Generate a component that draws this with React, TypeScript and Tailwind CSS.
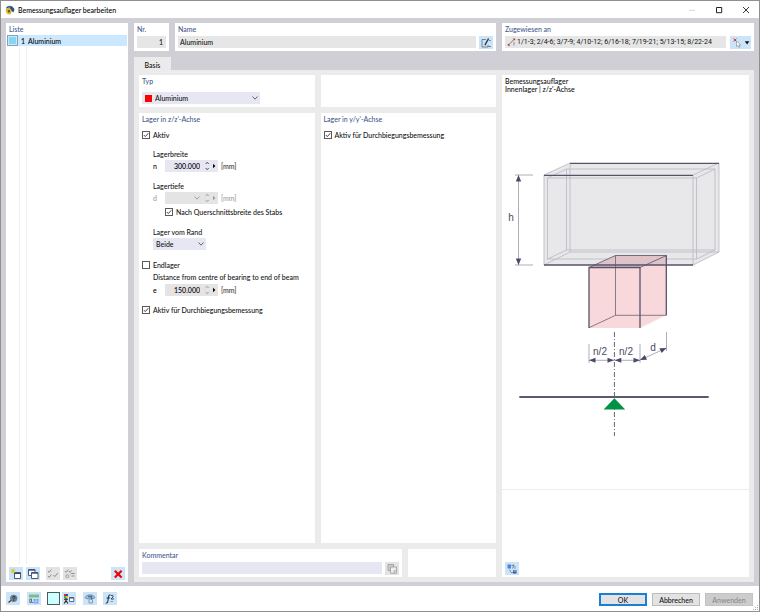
import type { ReactNode } from 'react'
import clsx from 'clsx'

/* ---------- building blocks ---------- */

function Card({ title, className, children }: { title?: string; className?: string; children?: ReactNode }) {
    return (
        <section className={clsx('bg-white px-[3px] min-w-0', className)}>
            {title && <h2 className="h-3 leading-3 text-[#44598c]">{title}</h2>}
            {children}
        </section>
    )
}

function IconButton({ label, disabled, className, children }: { label: string; disabled?: boolean; className?: string; children: ReactNode }) {
    return (
        <button
            type="button"
            aria-label={label}
            title={label}
            disabled={disabled}
            className={clsx('h-[13px] w-[14px] shrink-0 flex items-center justify-center', disabled ? 'bg-[#e3e3e3]' : 'bg-[#cce4f7]', className)}
        >
            {children}
        </button>
    )
}

function Icon({ children }: { children: ReactNode }) {
    return (
        <svg viewBox="0 0 12 12" className="size-3" fill="none" aria-hidden="true">
            {children}
        </svg>
    )
}

function Chevron({ className }: { className?: string }) {
    return (
        <svg viewBox="0 0 6 4" className={clsx('w-1.5 h-1 pointer-events-none', className)} fill="none" aria-hidden="true">
            <path d="M.5 .5 3 3.2 5.5 .5" stroke="currentColor" strokeWidth=".9" />
        </svg>
    )
}

function Check({ label, checked, className }: { label: string; checked?: boolean; className?: string }) {
    return (
        <label className={clsx('flex items-center gap-[3px] h-3', className)}>
            <span className="grid size-2 shrink-0">
                <input type="checkbox" defaultChecked={checked} className="peer appearance-none size-2 border border-[#5a5a5a] bg-white [grid-area:1/1]" />
                <svg viewBox="0 0 8 8" className="size-2 hidden peer-checked:block pointer-events-none [grid-area:1/1]" fill="none" aria-hidden="true">
                    <path d="M1.8 4 3.3 5.6 6.3 2.2" stroke="#333" strokeWidth=".9" />
                </svg>
            </span>
            {label}
        </label>
    )
}

function Dropdown({ label, value, className, children }: { label: string; value: string; className?: string; children?: ReactNode }) {
    return (
        <div className={clsx('flex items-center h-3 bg-[#e7e7f3] relative', className)}>
            {children}
            <select aria-label={label} className="appearance-none w-full h-3 leading-3 bg-transparent pl-[3px] pr-3">
                <option>{value}</option>
            </select>
            <Chevron className="absolute right-[2px] text-[#555]" />
        </div>
    )
}

type NumberFieldProps = { id: string; symbol: string; value?: string; disabled?: boolean; readOnly?: boolean; className?: string }

function NumberField({ id, symbol, value = '', disabled, readOnly, className }: NumberFieldProps) {
    return (
        <div className={clsx('flex items-center h-3 ml-[11px]', disabled ? 'text-[#9b9b9b]' : 'text-black', className)}>
            <label htmlFor={id} className="w-3">
                {symbol}
            </label>
            <div className={clsx('flex items-center w-[53px] h-3', disabled || readOnly ? 'bg-[#e4e4e4]' : 'bg-[#e7e7f3]')}>
                <input
                    id={id}
                    type="text"
                    defaultValue={value}
                    disabled={disabled}
                    readOnly={readOnly}
                    className="flex-1 min-w-0 h-3 leading-3 text-right bg-transparent"
                />
                {disabled && <Chevron />}
                <svg viewBox="0 0 18 12" className="w-[18px] h-3 shrink-0" aria-hidden="true">
                    <path d="M5.7 4 7.2 2.3 8.7 4M5.7 8 7.2 9.7 8.7 8" fill="none" stroke={disabled || readOnly ? '#999' : '#444'} strokeWidth=".9" />
                    <path d="M13 3.8 15.4 6 13 8.2z" fill="currentColor" />
                </svg>
            </div>
            <span className={clsx('ml-[3px]', !disabled && 'text-[#333]')}>[mm]</span>
        </div>
    )
}

/* ---------- support sketch ---------- */

function SupportSketch() {
    return (
        <svg viewBox="0 0 247 394" className="w-full flex-1 min-h-0" fill="none" role="img" aria-label="Innenlager">
            {/* hollow beam */}
            <path d="M42 80 68 68H217V157L191 170H42z" fill="#e8e8ea" />
            <g stroke="#bcbcc5" strokeWidth=".9">
                <path d="M42 80V170M191 80V170M68 68V157H217V68M42 80 68 68M191 80 217 68M42 170 68 157M191 170 217 157" />
                <path d="M45.5 83H194.5V164H45.5zM64.5 74H213V155H64.5z" />
                <path d="M45.5 83 64.5 74M194.5 83 213 74M45.5 164 64.5 155M194.5 164 213 155" />
            </g>
            <path d="M42 80.3H191M68 68.3H217" stroke="#55536a" strokeWidth="1.3" />

            {/* bearing block */}
            <path d="M87 172.5 113.5 160.5H164.5V220L138 233H87z" fill="#f8d8da" />
            <path d="M87 172.5 113.5 160.5H164.5V168L160 170H138V172.5z" fill="#dfc3c9" />
            <path d="M42 170H191" stroke="#55536a" strokeWidth="1.5" />
            <g stroke="#55536a">
                <path d="M87 172.5 113.5 160.5H164.5L138 172.5" strokeWidth=".8" />
                <path d="M113.5 160.5V220.3H164.5M87 232.7 113.5 220.3" strokeWidth=".7" />
                <path d="M87 233V172.5H138V233M164.3 160.5V220.3" strokeWidth="1.3" />
            </g>

            {/* dimension lines */}
            <g stroke="#8b8a9c" strokeWidth=".7">
                <path d="M13 80H31M13 170H31M16.5 80V170" />
                <path d="M87 249V268M138 249V268M164.5 237V256M87 265.3H138M138 265 164.5 253" />
            </g>
            <path d="M112.4 237V341" stroke="#55536a" strokeWidth=".9" strokeDasharray="5 2 1 2" />
            <g fill="#4b4a66">
                <path d="M16.5 80 13.8 86.5H19.2zM16.5 170 13.8 163.5H19.2z" />
                <path d="M87 265.3 93.5 262.8V267.8zM112 265.3 105.5 262.8V267.8zM112.8 265.3 119.3 262.8V267.8zM138 265.3 131.5 262.8V267.8z" />
                <path d="M138 265 142.8 260 145 264.8zM164.5 253 157.4 253.2 159.7 258z" />
            </g>
            <g fill="#4b4a66" fontFamily="Liberation Sans, sans-serif" fontSize="10" fontWeight="400" textAnchor="middle">
                <text x="9" y="126">h</text>
                <text x="98" y="260">n/2</text>
                <text x="124" y="260">n/2</text>
                <text x="151" y="256">d</text>
            </g>

            {/* static system */}
            <path d="M17.3 302H206.7" stroke="#5c5a70" strokeWidth="2" />
            <path d="M112.4 303.3 123.2 314.4H101.6z" fill="#009245" />
        </svg>
    )
}

/* ---------- dialog parts ---------- */

function TitleBar() {
    return (
        <header className="h-[17px] bg-white flex items-center pl-1">
            <svg viewBox="0 0 10 10" className="size-2.5" aria-hidden="true">
                <path d="M1 3.5C1.5 1 4.5 0 7 1.2L9.5 4 8.5 7.5 6.5 6 5 3.6z" fill="#2f5678" />
                <path d="M.8 3.6 3 3 5.2 4.2 6.8 6.6 5.6 9.4 2.6 9.2.9 7z" fill="#e5b930" />
                <path d="M2.6 5.2 4.6 4.8 5.2 7 3.4 7.8z" fill="#5b5a36" />
                <path d="M3 2.4 5.6 1.8" stroke="#8db2cf" strokeWidth=".7" />
            </svg>
            <h1 className="ml-[3px] text-black">Bemessungsauflager bearbeiten</h1>
            <div className="ml-auto flex">
                <button type="button" aria-label="Minimieren" disabled className="w-[27px] h-4 flex items-center justify-center">
                    <svg viewBox="0 0 8 8" className="size-2"><path d="M1 4.3H7" stroke="#ccc" strokeWidth=".8" /></svg>
                </button>
                <button type="button" aria-label="Maximieren" className="w-[27px] h-4 flex items-center justify-center">
                    <svg viewBox="0 0 8 8" className="size-2" fill="none"><path d="M1.5 1.5H6.7V6.7H1.5z" stroke="#222" /></svg>
                </button>
                <button type="button" aria-label="Schließen" className="w-[27px] h-4 flex items-center justify-center">
                    <svg viewBox="0 0 8 8" className="size-2"><path d="M1 1 7 7M7 1 1 7" stroke="#222" strokeWidth=".9" /></svg>
                </button>
            </div>
        </header>
    )
}

function ListPanel() {
    return (
        <aside className="w-[122px] bg-white flex flex-col">
            <h2 className="h-3 leading-3 pl-[3px] text-[#44598c]">Liste</h2>
            <ul className="px-px">
                <li>
                    <button type="button" className="w-full h-[11px] flex items-center bg-[#cce8ff] text-black">
                        <span className="size-[11px] border border-[#7fa3b8] bg-[#cce8ff] p-px">
                            <span className="block size-full bg-[#87d5f3]" />
                        </span>
                        <span className="w-[7px] text-right">1</span>
                        <span className="ml-[3px]">Aluminium</span>
                    </button>
                </li>
            </ul>
            <div className="flex-1 ml-[13px] w-2 border-x border-[#efefef]" />
            <div className="flex items-center px-[3px] pt-[3px] pb-[2px]">
                <IconButton label="Neu">
                    <Icon>
                        <path d="M4.5 4.5H10.5V10.5H4.5z" fill="#fff" stroke="#4d5a7d" />
                        <path d="M4 5.5H11" stroke="#37456b" />
                        <path d="M3 .5V5.5M.5 3H5.5M1.2 1.2 4.8 4.8M4.8 1.2 1.2 4.8" stroke="#d9c400" strokeWidth=".8" />
                    </Icon>
                </IconButton>
                <IconButton label="Kopieren" className="ml-[3px]">
                    <Icon>
                        <path d="M1.5 1.5H8V7.5H1.5z" fill="#fff" stroke="#4d5a7d" />
                        <path d="M1.5 2.2H8" stroke="#37456b" />
                        <path d="M4.5 4.5H11V10.5H4.5z" fill="#fff" stroke="#4d5a7d" />
                        <path d="M4.5 5.2H11" stroke="#37456b" />
                    </Icon>
                </IconButton>
                <IconButton label="Alle auswählen" disabled className="ml-1.5">
                    <Icon>
                        <path d="M1 3 2.2 4.4 4.4 1.6M1 8 2.2 9.4 4.4 6.6M6.4 7 7.8 8.6 10.8 5" stroke="#8f8f8f" />
                    </Icon>
                </IconButton>
                <IconButton label="Auswahl umkehren" disabled className="ml-[3px]">
                    <Icon>
                        <path d="M1 3 2.2 4.4 4.4 1.6M4.8 3 6 4.4 7.6 2.4M6.5 6.2 7.5 5.5H10.8M7.5 8H10.5" stroke="#8f8f8f" />
                        <circle cx="3.4" cy="8.2" r="1.5" stroke="#8f8f8f" strokeWidth=".8" />
                    </Icon>
                </IconButton>
                <IconButton label="Löschen" className="ml-auto">
                    <Icon>
                        <path d="M2.8 2.8 9.6 9.6M9.6 2.8 2.8 9.6" stroke="#f00000" strokeWidth="2.1" />
                    </Icon>
                </IconButton>
            </div>
        </aside>
    )
}

function TopRow() {
    return (
        <div className="grid grid-cols-[35px_minmax(0,1fr)_252px] gap-1.5 h-7">
            <Card title="Nr.">
                <input aria-label="Nr." readOnly value="1" className="block mt-px w-full h-3 leading-3 bg-[#e6e6e6] text-right pr-[3px]" />
            </Card>
            <Card title="Name">
                <div className="flex gap-[3px] mt-px">
                    <input aria-label="Name" readOnly value="Aluminium" className="flex-1 min-w-0 h-3 leading-3 bg-[#e6e6e6] pl-0.5" />
                    <IconButton label="Name bearbeiten">
                        <Icon>
                            <path d="M6 2.5H2V10H8V8" stroke="#5d6e7a" strokeWidth=".8" />
                            <path d="M8.6 1.5 5.6 6.8 5 8.3" stroke="#2d3d48" strokeWidth="1.4" />
                            <path d="M8 9.5H11M8.8 3.5H10.8" stroke="#5d6e7a" strokeWidth=".8" />
                        </Icon>
                    </IconButton>
                </div>
            </Card>
            <Card title="Zugewiesen an">
                <div className="flex gap-1 mt-px">
                    <div className="flex flex-1 min-w-0 items-center bg-[#e6e6e6] h-3 pl-0.5">
                        <svg viewBox="0 0 10 10" className="size-2.5 shrink-0" fill="none" aria-hidden="true">
                            <path d="M1.5 8 7 2.5" stroke="#777" />
                            <path d="M.8 7.2 2.5 8.8M6.5 1.5 8 3" stroke="#e02020" strokeWidth="1.3" />
                            <path d="M7 5V8.5" stroke="#777" strokeWidth=".8" />
                        </svg>
                        <input
                            aria-label="Zugewiesen an"
                            readOnly
                            value="1/1-3; 2/4-6; 3/7-9; 4/10-12; 6/16-18; 7/19-21; 5/13-15; 8/22-24"
                            className="flex-1 min-w-0 h-3 leading-3 bg-transparent font-[Roboto,sans-serif] font-normal"
                        />
                    </div>
                    <button type="button" aria-label="Auswählen" className="w-[21px] h-[13px] bg-[#cce4f7] flex items-center justify-center">
                        <Icon>
                            <path d="M1.5 1.5 4.5 4.5M4.5 1.5 1.5 4.5" stroke="#e02020" strokeWidth=".9" />
                            <path d="M4.5 4V9.5L6 8.3 7 10.5 8 10 7 7.9H8.7z" fill="#fff" stroke="#8592a0" strokeWidth=".7" />
                        </Icon>
                        <svg viewBox="0 0 6 4" className="w-1.5 h-1"><path d="M.8 .3H5.4L3.1 3.4z" fill="#111" /></svg>
                    </button>
                </div>
            </Card>
        </div>
    )
}

function BasisPanel() {
    return (
        <div className="flex-1 bg-[#ebebeb] p-[5px] grid grid-cols-[minmax(0,1fr)_247px] gap-1.5">
            <div className="grid grid-rows-[32px_1fr_28px] gap-1.5">
                <div className="grid grid-cols-2 gap-1.5">
                    <Card title="Typ">
                        <Dropdown label="Typ" value="Aluminium" className="mt-[5px] w-[118px] pl-[3px]">
                            <span className="size-[7px] bg-[#ff0000] shrink-0" />
                        </Dropdown>
                    </Card>
                    <Card />
                </div>
                <div className="grid grid-cols-2 gap-1.5">
                    <Card title="Lager in z/z'-Achse">
                        <Check label="Aktiv" checked className="mt-1" />
                        <h3 className="h-3 leading-3 mt-[7px] ml-[11px]">Lagerbreite</h3>
                        <NumberField id="width" symbol="n" value="300.000" />
                        <h3 className="h-3 leading-3 mt-2 ml-[11px]">Lagertiefe</h3>
                        <NumberField id="depth" symbol="d" disabled />
                        <Check label="Nach Querschnittsbreite des Stabs" checked className="mt-0.5 ml-[23px]" />
                        <h3 className="h-3 leading-3 mt-2 ml-[11px]">Lager vom Rand</h3>
                        <Dropdown label="Lager vom Rand" value="Beide" className="ml-[11px] w-[53px]" />
                        <Check label="Endlager" className="mt-[9px]" />
                        <p className="h-3 leading-3 ml-[11px] whitespace-nowrap">Distance from centre of bearing to end of beam</p>
                        <NumberField id="distance" symbol="e" value="150.000" readOnly className="mt-px" />
                        <Check label="Aktiv für Durchbiegungsbemessung" checked className="mt-2" />
                    </Card>
                    <Card title="Lager in y/y'-Achse">
                        <Check label="Aktiv für Durchbiegungsbemessung" checked className="mt-1" />
                    </Card>
                </div>
                <div className="grid grid-cols-[minmax(0,1fr)_88px] gap-1.5">
                    <Card title="Kommentar">
                        <div className="flex gap-[3px] mt-px">
                            <input aria-label="Kommentar" className="flex-1 min-w-0 h-3 leading-3 bg-[#e7e7f3]" />
                            <IconButton label="Kommentar wählen" disabled>
                                <Icon>
                                    <path d="M2 1.5H7.5V7.5H2z" fill="#ccc" stroke="#999" strokeWidth=".8" />
                                    <path d="M4.5 4H10.5V10.2H4.5z" fill="#eee" stroke="#999" strokeWidth=".8" />
                                    <path d="M8 10 8.2 7.8 10.3 7.7" stroke="#999" strokeWidth=".8" />
                                </Icon>
                            </IconButton>
                        </div>
                    </Card>
                    <Card />
                </div>
            </div>
            <section className="bg-white flex flex-col">
                <p className="leading-2 pt-0.5 pl-[3px] h-5">
                    Bemessungsauflager
                    <br />
                    Innenlager | z/z'-Achse
                </p>
                <SupportSketch />
                <div className="h-[88px] border-t border-[#ededed] flex items-end p-[3px] pb-[2px]">
                    <IconButton label="Ansicht">
                        <Icon>
                            <path d="M1.5 1.5H5V5.5H1.5z" fill="#4a86d8" />
                            <path d="M5.5 2.5 8 2 6.5 5.5" stroke="#666" strokeWidth=".8" />
                            <path d="M3.5 6.5 5 9.5H7M9 3V6" stroke="#7c93b5" />
                            <path d="M7 7H10.5V10.5H7z" fill="#35589a" />
                            <path d="M7.5 8H10" stroke="#fff" strokeWidth=".7" />
                        </Icon>
                    </IconButton>
                </div>
            </section>
        </div>
    )
}

function Footer() {
    return (
        <footer className="h-[25px] bg-white flex items-center pl-[5px] pr-1.5 relative">
            <IconButton label="Hilfe">
                <Icon>
                    <circle cx="6.7" cy="5.3" r="3.6" fill="#6d7f8d" />
                    <path d="M1.5 9.5 4 7.5" stroke="#444" strokeWidth="1.4" />
                    <path d="M5.6 4.4C5.8 3 8 3.2 7.8 4.6 7.6 5.4 6.7 5.4 6.7 6.4M6.7 7.1V7.8" stroke="#182028" strokeWidth=".9" />
                </Icon>
            </IconButton>
            <IconButton label="Einheiten" className="ml-[7px]">
                <Icon>
                    <path d="M1 1.5H11V4.5H1z" fill="#80bd84" />
                    <path d="M1.8 6V9.5H3.5V6zM4.5 9V10" stroke="#3c5c78" strokeWidth=".8" />
                    <path d="M5.5 6H10.5V10.5H5.5z" fill="#6ea7ea" />
                    <path d="M5.5 8.2H10.5M8 6V10.5" stroke="#cfe4fa" strokeWidth=".6" />
                </Icon>
            </IconButton>
            <button type="button" aria-label="Farbe" className="ml-1.5 size-[13px] border border-[#4d5a5c] bg-[#ccffff]" />
            <IconButton label="Anzeige" className="ml-[2px]">
                <Icon>
                    <path d="M1 1H3V3.2H1z" fill="#e22" />
                    <path d="M3 1H5V3.2H3z" fill="#2a4bd8" />
                    <path d="M1 3.2H3V5H1z" fill="#2ab52a" />
                    <path d="M3 3.2H5V5H3z" fill="#eac300" />
                    <path d="M3 5V7.5L1.2 10.5M3 7.5 4.8 10.5M1 6.2H5" stroke="#222" strokeWidth="1.1" />
                    <path d="M6.5 4.5H10.8V8.5H6.5z" fill="#fff" stroke="#4d5a7d" strokeWidth=".9" />
                    <path d="M6.5 5H10.8" stroke="#37456b" />
                </Icon>
            </IconButton>
            <IconButton label="Ansicht zurücksetzen" className="ml-[7px]">
                <Icon>
                    <path d="M1 4.5C3 1 9 1 11 4.5 9 6.5 3 6.5 1 4.5z" fill="#a9c4dc" stroke="#5d7890" strokeWidth=".8" />
                    <path d="M4 3.5H7.5V6.5" stroke="#476d90" strokeWidth="1.4" />
                    <path d="M5 6.5V10H8.5V6.5" stroke="#7f9db8" />
                </Icon>
            </IconButton>
            <IconButton label="Formel" className="ml-1.5">
                <Icon>
                    <path d="M6.5 2.2C5 1.6 4.6 3 4.4 4.5L3.8 8.5C3.6 9.8 2.8 10.4 1.8 9.8M2.6 5H6" stroke="#22364a" strokeWidth="1.1" />
                    <path d="M7 2.8C8 1.6 9.8 2.4 9 4L7 6H10" stroke="#22364a" strokeWidth=".9" />
                    <path d="M6.5 8.5H9" stroke="#6d8aa5" strokeWidth=".8" />
                </Icon>
            </IconButton>
            <div className="ml-auto flex gap-[5px] pt-0.5">
                <button type="button" className="w-12 h-[13px] border-2 border-[#1a80d6] bg-[#e3e3e3] flex items-center justify-center">OK</button>
                <button type="button" className="w-12 h-[13px] border border-[#bcbcbc] bg-[#e3e3e3] flex items-center justify-center">Abbrechen</button>
                <button type="button" disabled className="w-12 h-[13px] border border-[#c3c3c3] bg-[#cccccc] text-[#8a8a8a] flex items-center justify-center">Anwenden</button>
            </div>
            <svg viewBox="0 0 6 6" className="absolute right-0 bottom-0 size-1.5" aria-hidden="true">
                <path d="M4 0h1v1H4zM2 2h1v1H2zM4 2h1v1H4zM0 4h1v1H0zM2 4h1v1H2zM4 4h1v1H4z" fill="#aaa" />
            </svg>
        </footer>
    )
}

export default function App() {
    return (
        <div className="min-h-screen flex flex-col border border-[#8f8f8f] bg-[#d0cfd5] text-[7px] leading-3 font-medium text-[#111] font-[Lato,sans-serif]">
            <TitleBar />
            <main className="flex-1 flex gap-1.5 px-[5px] pt-[5px] pb-1">
                <ListPanel />
                <div className="flex-1 min-w-0 flex flex-col">
                    <TopRow />
                    <div role="tablist" className="flex mt-1.5">
                        <button type="button" role="tab" aria-selected="true" className="w-[37px] h-[13px] bg-[#ebebeb] pt-0.5">
                            Basis
                        </button>
                    </div>
                    <BasisPanel />
                </div>
            </main>
            <Footer />
        </div>
    )
}
